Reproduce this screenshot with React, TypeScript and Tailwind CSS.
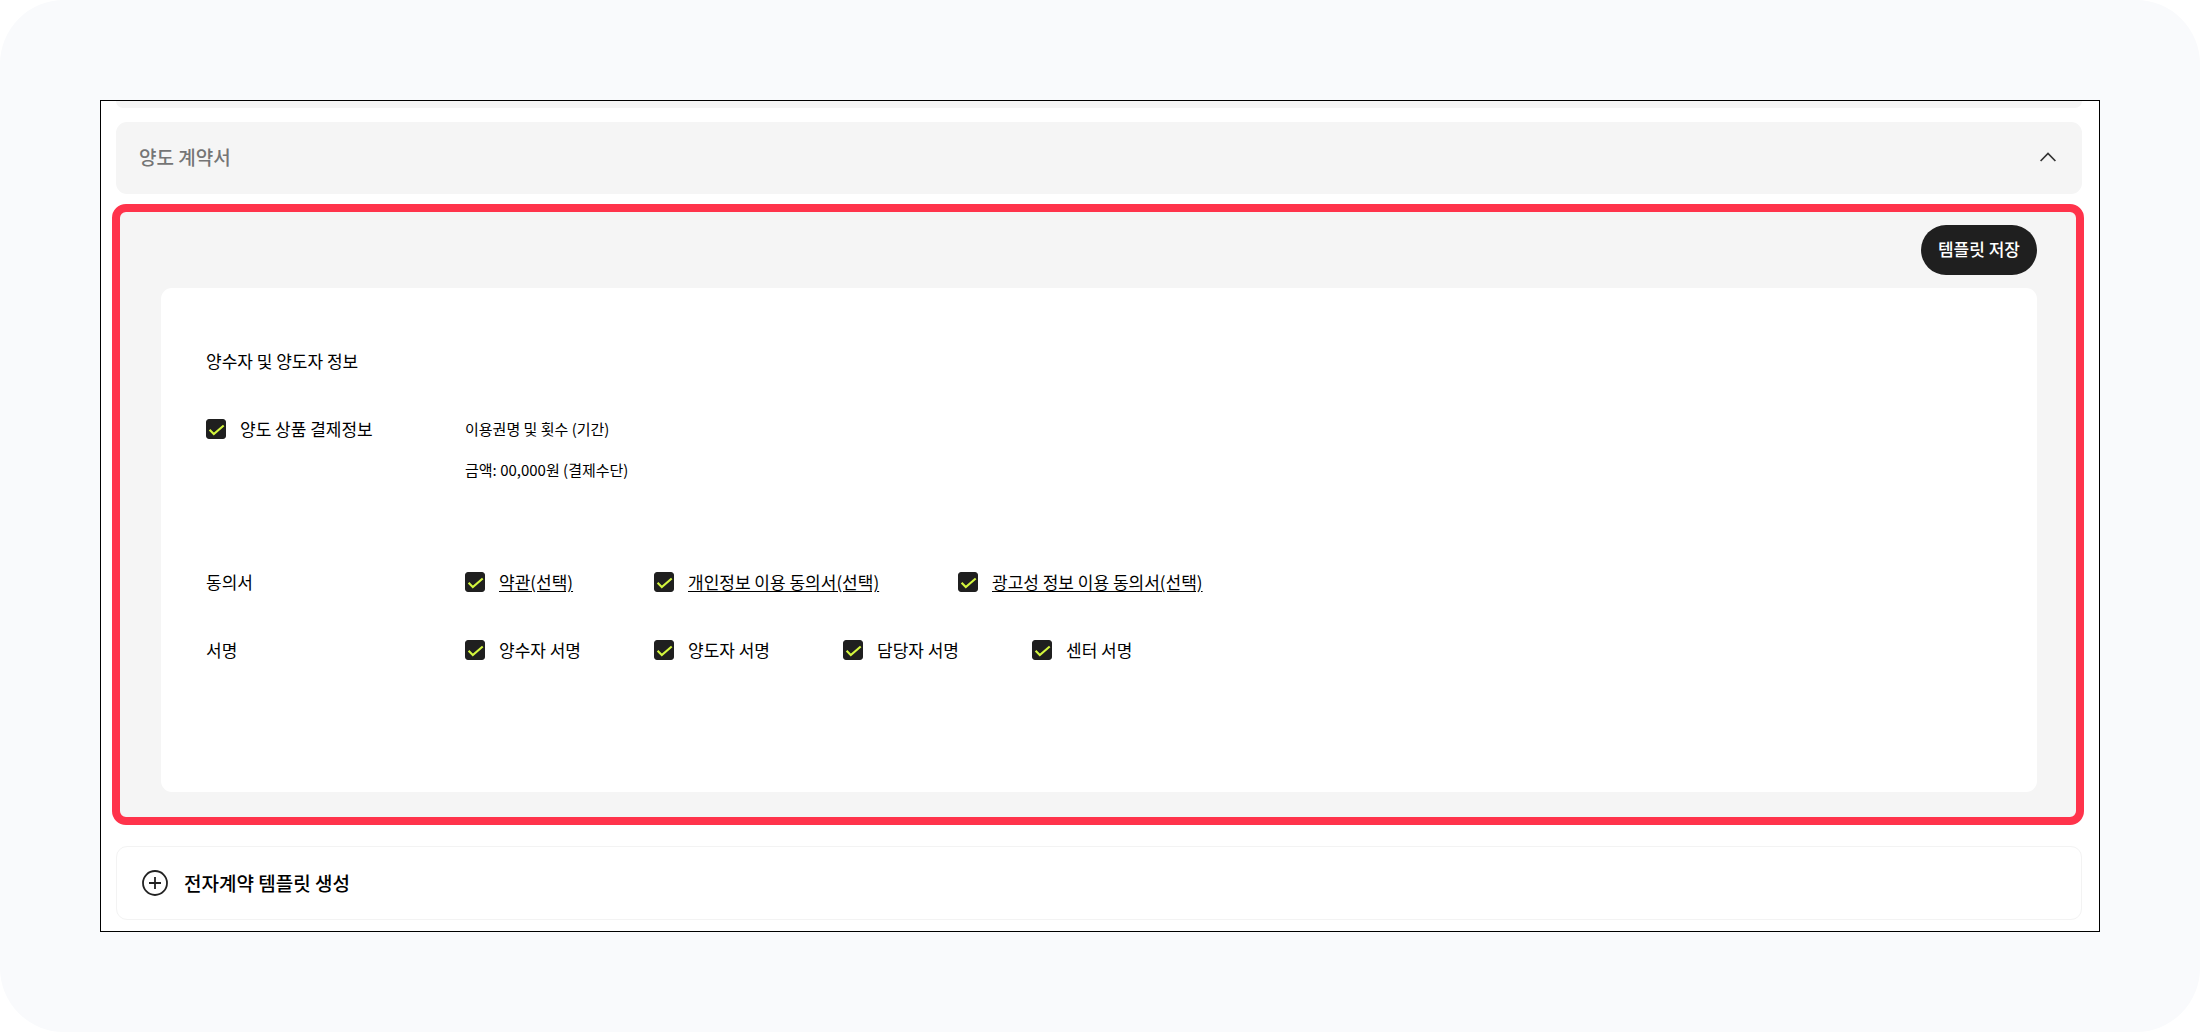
import { useState } from 'react';
import type { ReactNode } from 'react';

interface Option {
  id: string;
  label: string;
  width: string;
}

const AGREEMENTS: Option[] = [
  { id: 'terms', label: '약관(선택)', width: 'w-[189px]' },
  { id: 'privacy', label: '개인정보 이용 동의서(선택)', width: 'w-[304px]' },
  { id: 'ads', label: '광고성 정보 이용 동의서(선택)', width: 'w-[304px]' },
];

const SIGNATURES: Option[] = [
  { id: 'transferee', label: '양수자 서명', width: 'w-[189px]' },
  { id: 'transferor', label: '양도자 서명', width: 'w-[189px]' },
  { id: 'manager', label: '담당자 서명', width: 'w-[189px]' },
  { id: 'center', label: '센터 서명', width: 'w-[189px]' },
];

interface CheckboxProps {
  id: string;
  checked: boolean;
  onChange: (id: string) => void;
}

function Checkbox({ id, checked, onChange }: CheckboxProps) {
  return (
    <span className="relative flex w-5 h-5 flex-shrink-0">
      <input
        id={id}
        type="checkbox"
        checked={checked}
        onChange={() => onChange(id)}
        aria-labelledby={`${id}-label`}
        className="appearance-none w-5 h-5 rounded-[3px] border border-[#1f1f1f] bg-white checked:bg-[#1f1f1f]"
      />
      {checked && (
        <svg viewBox="0 0 20 20" fill="none" className="absolute inset-0 w-5 h-5 pointer-events-none">
          <path d="M3.6 10.8 7.8 15 17.7 6.5" stroke="#d3f53e" strokeWidth="2.1" />
        </svg>
      )}
    </span>
  );
}

function FormRow({ title, children }: { title: ReactNode; children: ReactNode }) {
  return (
    <div className="flex items-start">
      <div className="w-[259px] flex-shrink-0">{title}</div>
      {children}
    </div>
  );
}

export default function App() {
  const [open, setOpen] = useState(true);
  const [unchecked, setUnchecked] = useState<string[]>([]);

  const toggle = (id: string) => {
    setUnchecked((prev) => (prev.includes(id) ? prev.filter((v) => v !== id) : [...prev, id]));
  };

  const isChecked = (id: string) => !unchecked.includes(id);

  return (
    <div className="min-h-screen p-[100px] rounded-[64px] bg-[#f9fafc] font-['Noto_Sans_CJK_KR',sans-serif] text-[17px] leading-6 text-black">
      <main className="bg-white border border-black pl-[15px] pr-[17px] pb-[11px]">
        {/* Bottom edge of the previous section */}
        <div className="h-[7px] rounded-b-[10px] bg-[#f5f5f5]" />

        <button
          type="button"
          onClick={() => setOpen(!open)}
          aria-expanded={open}
          className="mt-3.5 w-full h-[72px] pl-[23px] pr-[26px] pb-0.5 rounded-[11px] bg-[#f5f5f5] flex items-center justify-between text-[19px] font-medium text-[#757575]"
        >
          <span>양도 계약서</span>
          <svg viewBox="0 0 16 10" fill="none" className={open ? 'w-4 h-2.5' : 'w-4 h-2.5 rotate-180'}>
            <path d="M0.6 9 8 1.4 15.4 9" stroke="#333333" strokeWidth="1.7" />
          </svg>
        </button>

        {open && (
          <section className="mt-2.5 -ml-1 -mr-0.5 border-8 border-[#ff334b] rounded-[14px] bg-[#f5f5f5] pt-[13px] pb-[25px] pl-[41px] pr-[39px]">
            <div className="flex justify-end">
              <button type="button" className="h-[50px] px-[17px] pb-0.5 rounded-full bg-[#1f1f1f] font-medium text-white">
                템플릿 저장
              </button>
            </div>

            <div className="mt-[13px] rounded-[11px] bg-white pt-[61px] pb-[130px] pl-[45px] pr-[45px]">
              <h2>양수자 및 양도자 정보</h2>

              <div className="mt-11">
                <FormRow
                  title={
                    <div className="flex items-center gap-3.5">
                      <Checkbox id="payment" checked={isChecked('payment')} onChange={toggle} />
                      <label id="payment-label" htmlFor="payment">양도 상품 결제정보</label>
                    </div>
                  }
                >
                  <div className="flex flex-col gap-[17px] text-[15px] leading-6">
                    <p>이용권명 및 횟수 (기간)</p>
                    <p>금액: 00,000원 (결제수단)</p>
                  </div>
                </FormRow>
              </div>

              <div className="mt-[88px] flex flex-col gap-11">
                <FormRow title="동의서">
                  {AGREEMENTS.map((a) => (
                    <div key={a.id} className={`flex items-center gap-3.5 ${a.width}`}>
                      <Checkbox id={a.id} checked={isChecked(a.id)} onChange={toggle} />
                      <a id={`${a.id}-label`} href={`#${a.id}`} className="underline underline-offset-2 whitespace-nowrap">
                        {a.label}
                      </a>
                    </div>
                  ))}
                </FormRow>

                <FormRow title="서명">
                  {SIGNATURES.map((s) => (
                    <div key={s.id} className={`flex items-center gap-3.5 ${s.width}`}>
                      <Checkbox id={s.id} checked={isChecked(s.id)} onChange={toggle} />
                      <label id={`${s.id}-label`} htmlFor={s.id}>{s.label}</label>
                    </div>
                  ))}
                </FormRow>
              </div>
            </div>
          </section>
        )}

        <button
          type="button"
          className="mt-[21px] w-full h-[74px] pl-[25px] rounded-[11px] border border-[#f3f3f3] bg-white flex items-center gap-4 text-[19px] font-medium"
        >
          <svg viewBox="0 0 26 26" fill="none" stroke="#222222" strokeWidth="1.8" className="w-[26px] h-[26px]">
            <circle cx="13" cy="13" r="12" />
            <path d="M13 7v12M7 13h12" />
          </svg>
          전자계약 템플릿 생성
        </button>
      </main>
    </div>
  );
}
